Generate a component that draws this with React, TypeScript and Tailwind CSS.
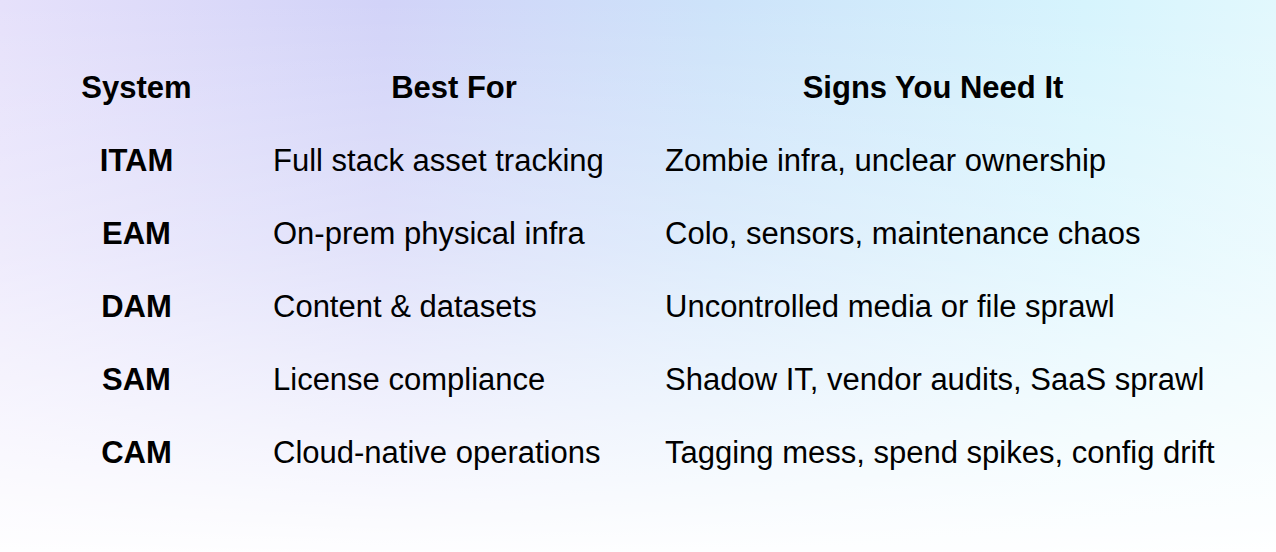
const rows = [
  { system: 'ITAM', bestFor: 'Full stack asset tracking', signs: 'Zombie infra, unclear ownership' },
  { system: 'EAM', bestFor: 'On-prem physical infra', signs: 'Colo, sensors, maintenance chaos' },
  { system: 'DAM', bestFor: 'Content & datasets', signs: 'Uncontrolled media or file sprawl' },
  { system: 'SAM', bestFor: 'License compliance', signs: 'Shadow IT, vendor audits, SaaS sprawl' },
  { system: 'CAM', bestFor: 'Cloud-native operations', signs: 'Tagging mess, spend spikes, config drift' },
]

const App = () => {
  return (
    <div className="relative h-[552px] w-[1276px] overflow-hidden bg-[linear-gradient(to_right,#e6e1fb_0%,#d2d3f8_30%,#cde3fa_56%,#d6f4fd_85%,#e2f8fd_100%)] font-['Liberation_Sans',Arial,sans-serif] text-black">
      <div className="h-full w-full bg-[linear-gradient(to_bottom,rgba(255,255,255,0)_0%,rgba(255,255,255,0.35)_45%,rgba(255,255,255,0.97)_100%)] px-5 pt-[52px]">
        <div className="grid grid-cols-[233px_392px_576px] text-[31px]">
          <div className="flex h-[73px] items-center justify-center font-bold">System</div>
          <div className="flex h-[73px] items-center justify-center pl-[10px] font-bold">Best For</div>
          <div className="flex h-[73px] items-center justify-center font-bold">Signs You Need It</div>
          {rows.map(row => (
            <div className="contents" key={row.system}>
              <div className="flex h-[73px] items-center justify-center font-bold">{row.system}</div>
              <div className="flex h-[73px] items-center pl-5">{row.bestFor}</div>
              <div className="flex h-[73px] items-center pl-5 whitespace-nowrap">{row.signs}</div>
            </div>
          ))}
        </div>
      </div>
    </div>
  )
}

export default App
